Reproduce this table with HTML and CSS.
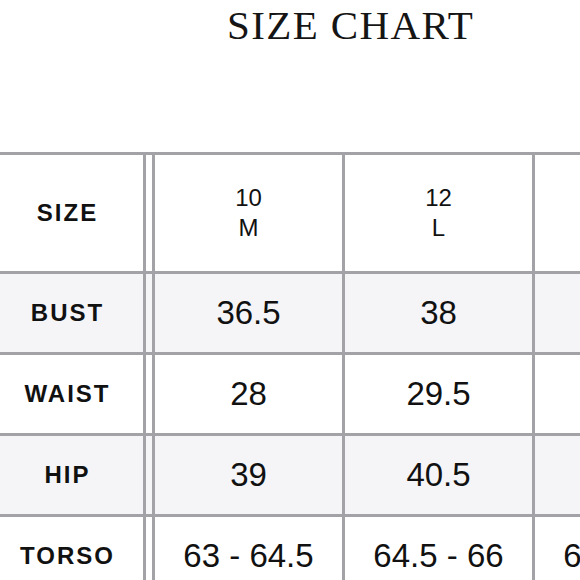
FILE: index.html
```html
<!DOCTYPE html>
<html>
<head>
<meta charset="utf-8">
<link rel="stylesheet" href="styles.css">
</head>
<body>
<h1 class="title">SIZE CHART</h1>
<div class="chart">
  <div class="row head">
    <div class="label">SIZE</div><div class="spacer"></div>
    <div class="cell">10<br>M</div>
    <div class="cell">12<br>L</div>
    <div class="cell"></div>
  </div>
  <div class="row shade">
    <div class="label">BUST</div><div class="spacer"></div>
    <div class="cell num">36.5</div>
    <div class="cell num">38</div>
    <div class="cell num"></div>
  </div>
  <div class="row">
    <div class="label">WAIST</div><div class="spacer"></div>
    <div class="cell num">28</div>
    <div class="cell num">29.5</div>
    <div class="cell num"></div>
  </div>
  <div class="row shade">
    <div class="label">HIP</div><div class="spacer"></div>
    <div class="cell num">39</div>
    <div class="cell num">40.5</div>
    <div class="cell num"></div>
  </div>
  <div class="row">
    <div class="label">TORSO</div><div class="spacer"></div>
    <div class="cell num">63 - 64.5</div>
    <div class="cell num">64.5 - 66</div>
    <div class="cell num">66 - 67.5</div>
  </div>
</div>
</body>
</html>
```
FILE: styles.css
```css
html, body {
  margin: 0;
  padding: 0;
  background: #ffffff;
  overflow: hidden;
  width: 580px;
  height: 580px;
}
body {
  font-family: "Liberation Sans", Arial, sans-serif;
  color: #111111;
}
.title {
  margin: 5px 0 0 0;
  padding-left: 227px;
  font-family: "Liberation Serif", "Times New Roman", serif;
  font-weight: normal;
  font-size: 41px;
  line-height: 41px;
  letter-spacing: 1.4px;
  color: #151515;
  white-space: nowrap;
}
.chart {
  margin-top: 106px;
  width: 800px;
  border-top: 3px solid #a3a3a7;
}
.row {
  display: flex;
  height: 78px;
  border-bottom: 3px solid #a3a3a7;
}
.row.head {
  height: 116px;
}
.row.shade {
  background: #f5f5f7;
}
.label {
  width: 135px;
  padding-right: 8px;
  border-right: 3px solid #a3a3a7;
  display: flex;
  align-items: center;
  justify-content: center;
  font-weight: bold;
  font-size: 24px;
  letter-spacing: 2px;
}
.spacer {
  width: 6px;
  border-right: 3px solid #a3a3a7;
}
.cell {
  width: 187px;
  border-right: 3px solid #a3a3a7;
  display: flex;
  align-items: center;
  justify-content: center;
  text-align: center;
  font-size: 24px;
  line-height: 30px;
  white-space: nowrap;
}
.cell.num {
  font-size: 33px;
  line-height: 38px;
}
```
